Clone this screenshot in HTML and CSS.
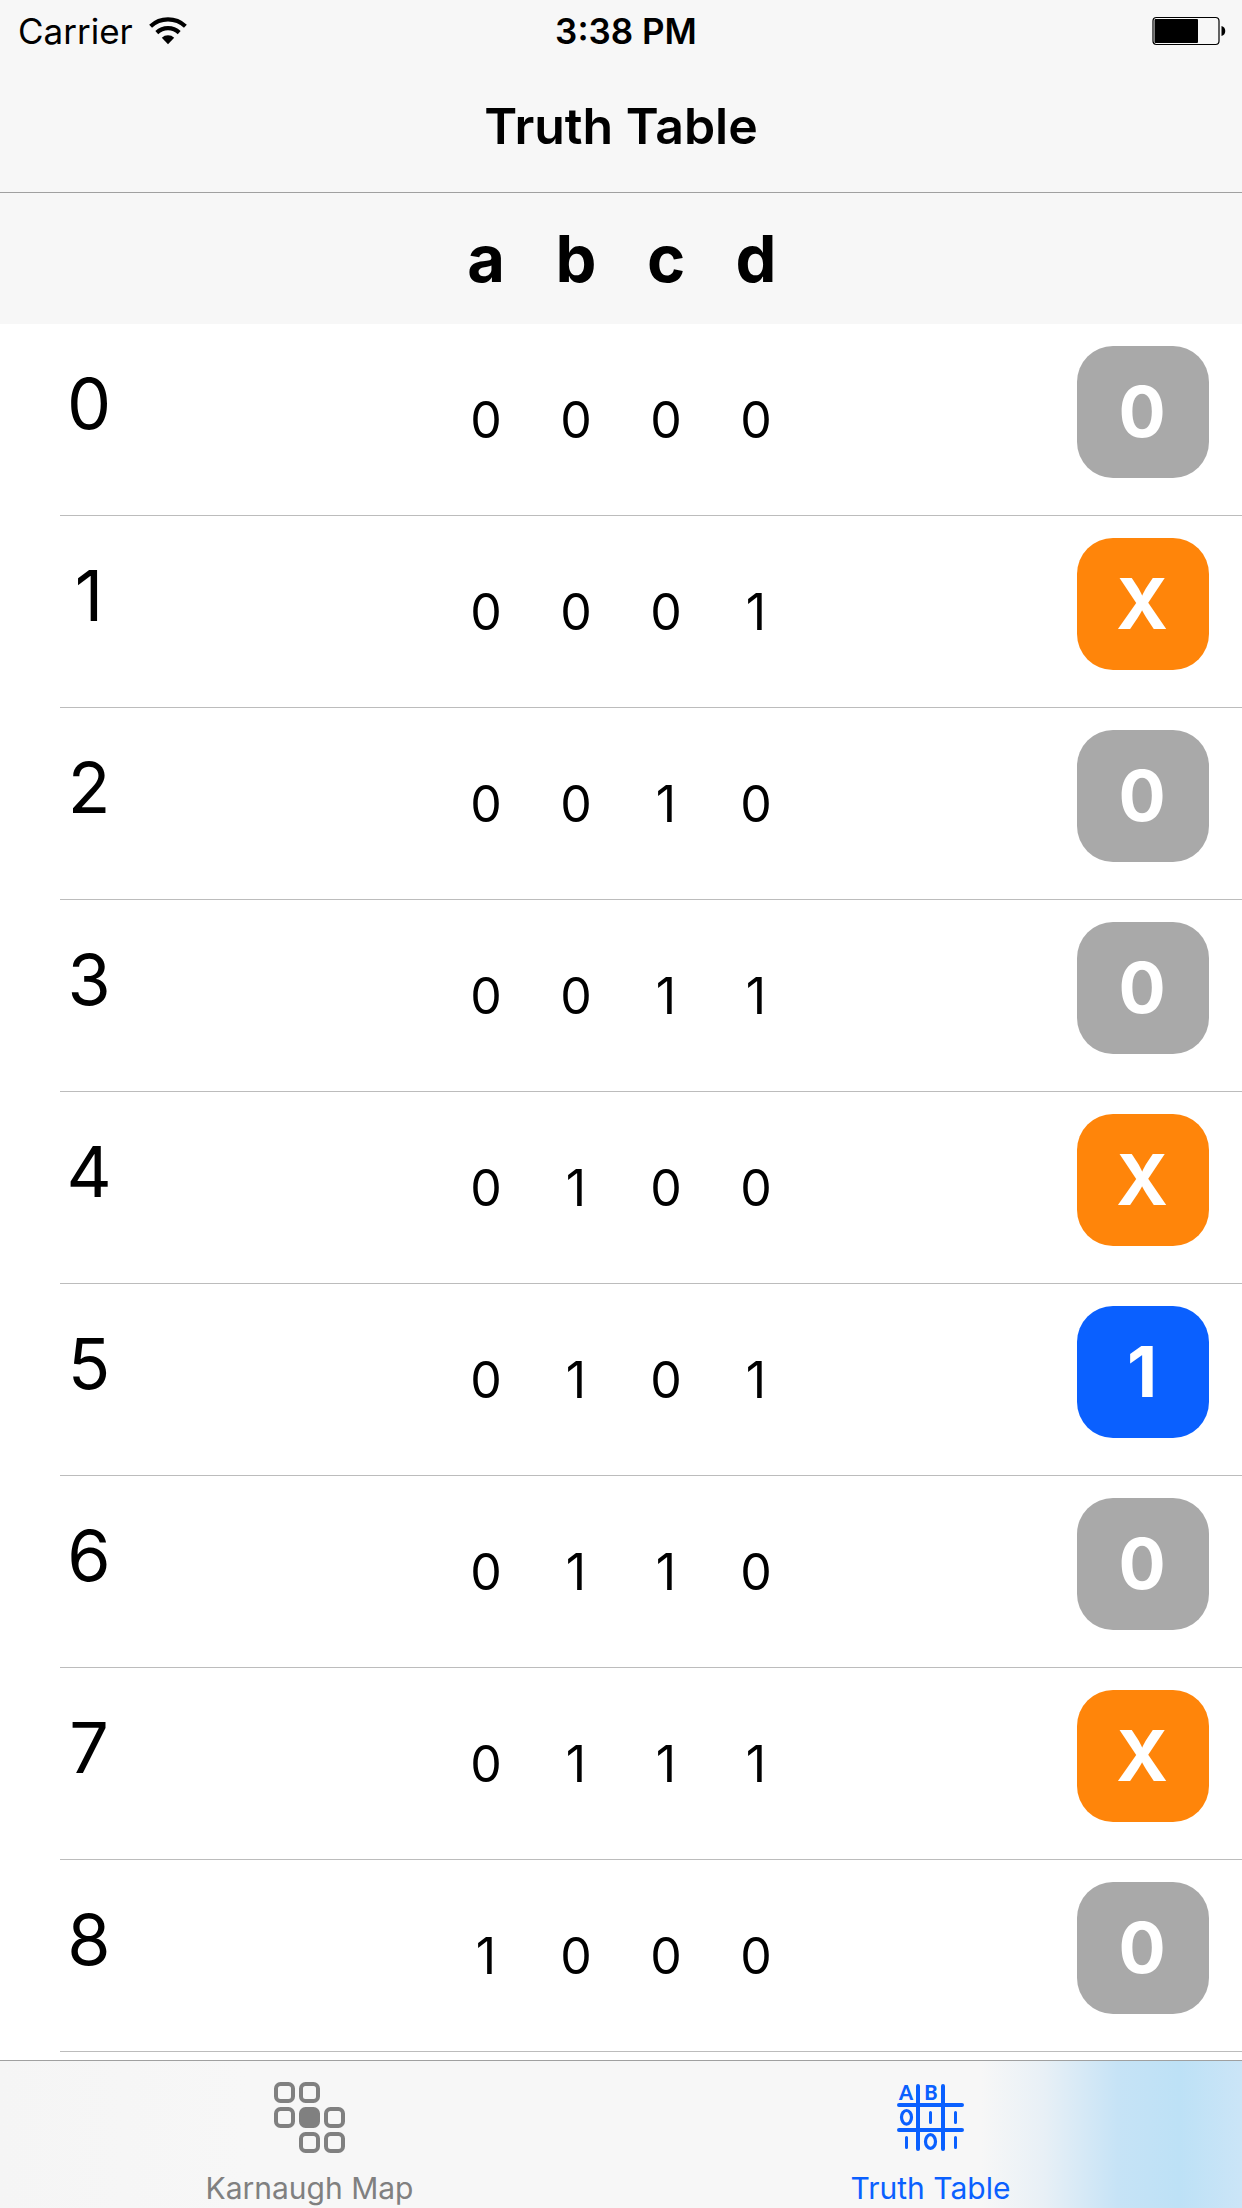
FILE: index.html
```html
<!DOCTYPE html>
<html lang="en">
<head>
<meta charset="utf-8">
<meta name="viewport" content="width=device-width, initial-scale=1">
<title>Truth Table</title>
<link rel="stylesheet" href="styles.css">
</head>
<body>
<header class="topbar">
  <div class="status">
    <div class="status-left">
      <span>Carrier</span>
      <svg class="wifi" width="38" height="28" viewBox="0 0 38 28" aria-hidden="true">
        <g fill="none" stroke="#000" stroke-width="4.2">
          <path d="M1.6 9.2a25.5 25.5 0 0 1 34.8 0"/>
          <path d="M7.8 15.6a16.4 16.4 0 0 1 22.4 0"/>
        </g>
        <path d="M19 27.2l-6.2-6.4a9 9 0 0 1 12.4 0z"/>
      </svg>
    </div>
    <span class="time">3:38 PM</span>
    <div class="status-right">
      <svg width="74" height="30" viewBox="0 0 74 30" aria-hidden="true">
        <rect x="1" y="1.5" width="66" height="27" rx="3.5" fill="none" stroke="#000" stroke-width="1.2"/>
        <rect x="2.5" y="3" width="43.5" height="24" rx="1"/>
        <path d="M69.5 10c5 1 5 9 0 10z"/>
      </svg>
    </div>
  </div>
  <h1 class="title">Truth Table</h1>
</header>

<main class="content">
  <table class="truth">
    <colgroup><col><col class="bit-col" span="4"><col></colgroup>
    <thead>
      <tr><td></td><th scope="col">a</th><th scope="col">b</th><th scope="col">c</th><th scope="col">d</th><td></td></tr>
    </thead>
    <tbody>
      <tr><th scope="row"><span class="index">0</span></th><td>0</td><td>0</td><td>0</td><td>0</td><td class="output"><button class="value zero" type="button">0</button></td></tr>
      <tr><th scope="row"><span class="index">1</span></th><td>0</td><td>0</td><td>0</td><td>1</td><td class="output"><button class="value any" type="button">X</button></td></tr>
      <tr><th scope="row"><span class="index">2</span></th><td>0</td><td>0</td><td>1</td><td>0</td><td class="output"><button class="value zero" type="button">0</button></td></tr>
      <tr><th scope="row"><span class="index">3</span></th><td>0</td><td>0</td><td>1</td><td>1</td><td class="output"><button class="value zero" type="button">0</button></td></tr>
      <tr><th scope="row"><span class="index">4</span></th><td>0</td><td>1</td><td>0</td><td>0</td><td class="output"><button class="value any" type="button">X</button></td></tr>
      <tr><th scope="row"><span class="index">5</span></th><td>0</td><td>1</td><td>0</td><td>1</td><td class="output"><button class="value one" type="button">1</button></td></tr>
      <tr><th scope="row"><span class="index">6</span></th><td>0</td><td>1</td><td>1</td><td>0</td><td class="output"><button class="value zero" type="button">0</button></td></tr>
      <tr><th scope="row"><span class="index">7</span></th><td>0</td><td>1</td><td>1</td><td>1</td><td class="output"><button class="value any" type="button">X</button></td></tr>
      <tr><th scope="row"><span class="index">8</span></th><td>1</td><td>0</td><td>0</td><td>0</td><td class="output"><button class="value zero" type="button">0</button></td></tr>
    </tbody>
  </table>
</main>

<nav class="tabbar">
  <a class="tab" href="#map">
    <svg width="72" height="72" viewBox="0 0 72 72" fill="none" stroke="currentColor" stroke-width="4" aria-hidden="true">
      <rect x="2" y="2" width="17" height="17" rx="4.5"/>
      <rect x="27" y="2" width="17" height="17" rx="4.5"/>
      <rect x="2" y="27" width="17" height="17" rx="4.5"/>
      <rect x="27" y="27" width="17" height="17" rx="4.5" fill="currentColor"/>
      <rect x="52" y="27" width="17" height="17" rx="4.5"/>
      <rect x="27" y="52" width="17" height="17" rx="4.5"/>
      <rect x="52" y="52" width="17" height="17" rx="4.5"/>
    </svg>
    <span>Karnaugh Map</span>
  </a>
  <a class="tab active" href="#table" aria-current="page">
    <svg width="72" height="72" viewBox="0 0 72 72" fill="none" stroke="currentColor" stroke-linecap="round" aria-hidden="true">
      <path stroke-width="4" d="M23 4v63M48 4v63M4 23h63M4 48h63"/>
      <path stroke-width="3" d="M35.5 30.5v10M60.5 30.5v10M11.5 55.5v10M60.5 55.5v10"/>
      <ellipse cx="11.5" cy="35.3" rx="5" ry="6.8" stroke-width="3.2"/>
      <ellipse cx="35.5" cy="59.5" rx="5" ry="6.8" stroke-width="3.2"/>
      <text class="glyph" x="11" y="18">A</text>
      <text class="glyph" x="36" y="18">B</text>
    </svg>
    <span>Truth Table</span>
  </a>
</nav>
</body>
</html>
```
FILE: styles.css
```css
* {
  box-sizing: border-box;
}

body {
  margin: 0;
  min-height: 100vh;
  display: flex;
  flex-direction: column;
  background: #fff;
  color: #000;
  font-family: Inter, "Liberation Sans", sans-serif;
}

/* Status and navigation */
.topbar {
  background: #f7f7f7;
  border-bottom: 1px solid #a0a0a0;
}

.status {
  display: grid;
  grid-template-columns: 1fr auto 1fr;
  align-items: center;
  height: 60px;
  padding: 2px 16px 0 18px;
  font-size: 35px;
  line-height: 58px;
}

.status-left {
  display: flex;
  align-items: center;
  gap: 16px;
}

.status-right {
  display: flex;
  justify-content: flex-end;
}

.status svg {
  display: block;
}

.time {
  padding-left: 8px;
  font-weight: 600;
}

.title {
  margin: 0;
  font-size: 50px;
  font-weight: 600;
  line-height: 132px;
  text-align: center;
}

/* Truth table */
.content {
  flex: 1;
}

.truth {
  width: 100%;
  table-layout: fixed;
  border-collapse: collapse;
  font-size: 50px;
  text-align: center;
}

.truth th,
.truth td {
  padding: 0;
}

.bit-col {
  width: 90px;
}

.truth thead tr {
  height: 131px;
  background: #f7f7f7;
}

.truth thead th {
  font-size: 65px;
  font-weight: 700;
}

.truth tbody tr {
  height: 192px;
  background: linear-gradient(#bcbcbc, #bcbcbc) right bottom / calc(100% - 60px) 1px no-repeat;
}

.truth tbody th {
  padding-left: 66px;
  font-size: 70px;
  font-weight: 400;
  line-height: 160px;
  text-align: left;
  vertical-align: top;
}

.index {
  display: block;
  width: 46px;
  text-align: center;
}

.truth .output {
  padding: 22px 33px 0 0;
  vertical-align: top;
}

.value {
  display: block;
  width: 132px;
  height: 132px;
  margin-left: auto;
  padding: 0 2px 0 0;
  border: 0;
  border-radius: 36px;
  color: #fff;
  font: inherit;
  font-size: 70px;
  font-weight: 700;
  line-height: 132px;
}

.zero {
  background: #a9a9a9;
}

.any {
  background: #ff850a;
}

.one {
  background: #0a60ff;
}

/* Tab bar */
.tabbar {
  display: flex;
  border-top: 1px solid #a0a0a0;
  background: linear-gradient(90deg, #f5f5f5 0%, #f7f7f7 20%, #f7f7f7 79%, #e8f0f6 84%, #c6e3f6 90%, #bde1f6 95%, #cbe5f7 100%);
}

.tab {
  flex: 1;
  display: flex;
  flex-direction: column;
  align-items: center;
  gap: 16px;
  padding: 21px 2px 2px 0;
  color: #808080;
  font-size: 30px;
  line-height: 36px;
  text-decoration: none;
}

.tab svg {
  overflow: visible;
}

.active {
  color: #0a60ff;
}

.glyph {
  fill: currentColor;
  stroke: none;
  font-family: Lato, sans-serif;
  font-size: 20px;
  font-weight: 900;
  text-anchor: middle;
}
```
